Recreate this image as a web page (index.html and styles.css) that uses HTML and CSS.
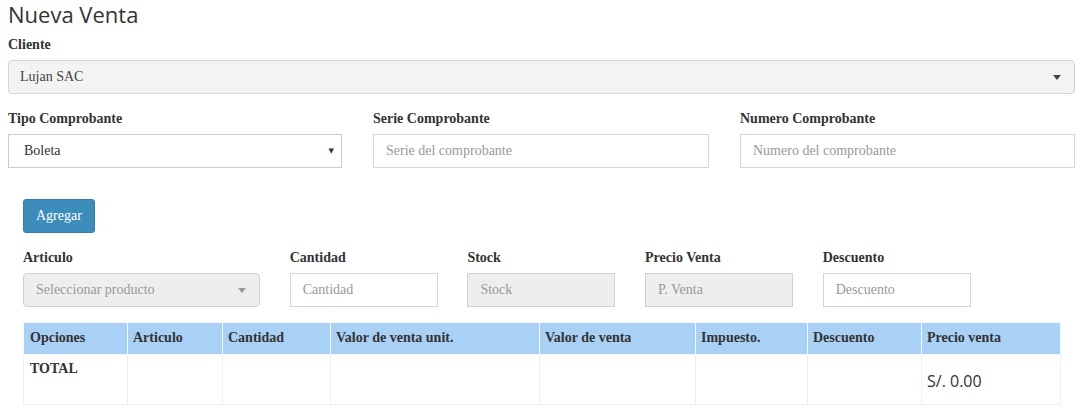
FILE: index.html
```html
<!DOCTYPE html>
<html lang="es">
<head>
<meta charset="utf-8">
<title>Nueva Venta</title>
<link rel="stylesheet" href="styles.css">
</head>
<body>
<h3 class="title">Nueva Venta</h3>

<div class="group">
  <label class="lbl">Cliente</label>
  <div class="select2">
    <span>Lujan SAC</span>
    <span class="caret dark"></span>
  </div>
</div>

<div class="row3">
  <div class="group">
    <label class="lbl">Tipo Comprobante</label>
    <div class="native-select">
      <span>Boleta</span>
      <span class="tri">&#9660;</span>
    </div>
  </div>
  <div class="group">
    <label class="lbl">Serie Comprobante</label>
    <input class="ctl" type="text" placeholder="Serie del comprobante">
  </div>
  <div class="group">
    <label class="lbl">Numero Comprobante</label>
    <input class="ctl" type="text" placeholder="Numero del comprobante">
  </div>
</div>

<div class="detail">
  <button class="btn" type="button">Agregar</button>

  <div class="row5">
    <div class="group">
      <label class="lbl">Articulo</label>
      <div class="select2 disabled">
        <span>Seleccionar producto</span>
        <span class="caret light"></span>
      </div>
    </div>
    <div class="group">
      <label class="lbl">Cantidad</label>
      <input class="ctl" type="text" placeholder="Cantidad">
    </div>
    <div class="group">
      <label class="lbl">Stock</label>
      <input class="ctl ro" type="text" placeholder="Stock" readonly>
    </div>
    <div class="group">
      <label class="lbl">Precio Venta</label>
      <input class="ctl ro" type="text" placeholder="P. Venta" readonly>
    </div>
    <div class="group">
      <label class="lbl">Descuento</label>
      <input class="ctl" type="text" placeholder="Descuento">
    </div>
  </div>

  <table class="tbl">
    <colgroup>
      <col class="c1"><col class="c2"><col class="c3"><col class="c4">
      <col class="c5"><col class="c6"><col class="c7"><col class="c8">
    </colgroup>
    <thead>
      <tr>
        <th>Opciones</th>
        <th>Articulo</th>
        <th>Cantidad</th>
        <th>Valor de venta unit.</th>
        <th>Valor de venta</th>
        <th>Impuesto.</th>
        <th>Descuento</th>
        <th>Precio venta</th>
      </tr>
    </thead>
    <tbody>
      <tr>
        <th>TOTAL</th>
        <td></td>
        <td></td>
        <td></td>
        <td></td>
        <td></td>
        <td></td>
        <td><h4 class="total">S/. 0.00</h4></td>
      </tr>
    </tbody>
  </table>
</div>
</body>
</html>
```

FILE: styles.css
```css
* { box-sizing: border-box; }

body {
  margin: 0;
  padding: 0 8px;
  font-family: "Liberation Serif", "Times New Roman", serif;
  font-size: 14px;
  color: #333;
  background: #fff;
}

.title {
  margin: 0;
  font-family: "Open Sans", "Liberation Sans", sans-serif;
  font-weight: 400;
  font-size: 22px;
  line-height: 28px;
  color: #333;
}

.group {
  display: flex;
  flex-direction: column;
}

.lbl {
  display: block;
  font-weight: bold;
  line-height: 20px;
  margin-bottom: 5px;
  color: #333;
}

.title + .group { margin-top: 7px; }

.select2 {
  height: 34px;
  display: flex;
  align-items: center;
  justify-content: space-between;
  padding: 0 12px 0 11px;
  background: #f3f3f3;
  border: 1px solid #d5d5d5;
  border-radius: 4px;
  color: #444;
}

.select2.disabled {
  background: #eee;
  border-color: #d2d2d2;
  color: #999;
  padding: 0 13px 0 12px;
}

.caret {
  width: 0;
  height: 0;
  border-left: 4px solid transparent;
  border-right: 4px solid transparent;
  border-top: 5px solid #555;
}
.caret.dark { border-top-color: #444; margin-right: 1px; }
.caret.light { border-top-color: #999; }

.row3 {
  display: grid;
  grid-template-columns: 334px 336px 335px;
  column-gap: 31px;
  margin-top: 15px;
}

.native-select {
  height: 34px;
  display: flex;
  align-items: center;
  justify-content: space-between;
  padding: 0 7px 0 15px;
  border: 1px solid #ccc;
  background: #fff;
  color: #333;
}
.native-select .tri {
  font-family: "DejaVu Sans", sans-serif;
  font-size: 7px;
  color: #333;
}

.ctl {
  height: 34px;
  width: 100%;
  padding: 6px 12px;
  border: 1px solid #d2d6de;
  border-radius: 0;
  font-family: "Liberation Serif", "Times New Roman", serif;
  font-size: 14px;
  color: #555;
  background: #fff;
  outline: none;
}
.ctl::placeholder { color: #999; opacity: 1; }
.ctl.ro { background: #eee; border-color: #d2d2d2; }

.detail {
  padding-left: 15px;
  padding-right: 16px;
}

.btn {
  display: block;
  margin-top: 31px;
  height: 34px;
  padding: 0 12px;
  background: #3c8dbc;
  border: 1px solid #367fa9;
  border-radius: 3px;
  color: #fff;
  font-family: "Liberation Serif", "Times New Roman", serif;
  font-size: 14px;
}

.row5 {
  display: grid;
  grid-template-columns: 237px 148px 148px 148px 148px;
  column-gap: 29.7px;
  margin-top: 15px;
}

.tbl {
  margin-top: 15px;
  width: 1037px;
  border-collapse: collapse;
  table-layout: fixed;
}
.c1 { width: 104px; }
.c2 { width: 95px; }
.c3 { width: 108px; }
.c4 { width: 209px; }
.c5 { width: 156px; }
.c6 { width: 112px; }
.c7 { width: 114px; }
.c8 { width: 139px; }

.tbl th, .tbl td {
  border: 1px solid #f0f0f0;
  text-align: left;
  vertical-align: top;
  padding: 7px 5px;
  line-height: 16px;
}
.tbl thead th {
  background: #a9d0f5;
  border-color: #f4f8fc;
  height: 32px;
}
.tbl thead th:first-child, .tbl tbody th { padding-left: 6px; }
.tbl tbody th, .tbl tbody td { height: 50px; }
.tbl tbody th { padding-top: 6px; }

.total {
  margin: 9px 0 0;
  font-family: "Open Sans", "Liberation Sans", sans-serif;
  font-weight: 400;
  font-size: 16px;
  line-height: 20px;
  color: #333;
}
```
